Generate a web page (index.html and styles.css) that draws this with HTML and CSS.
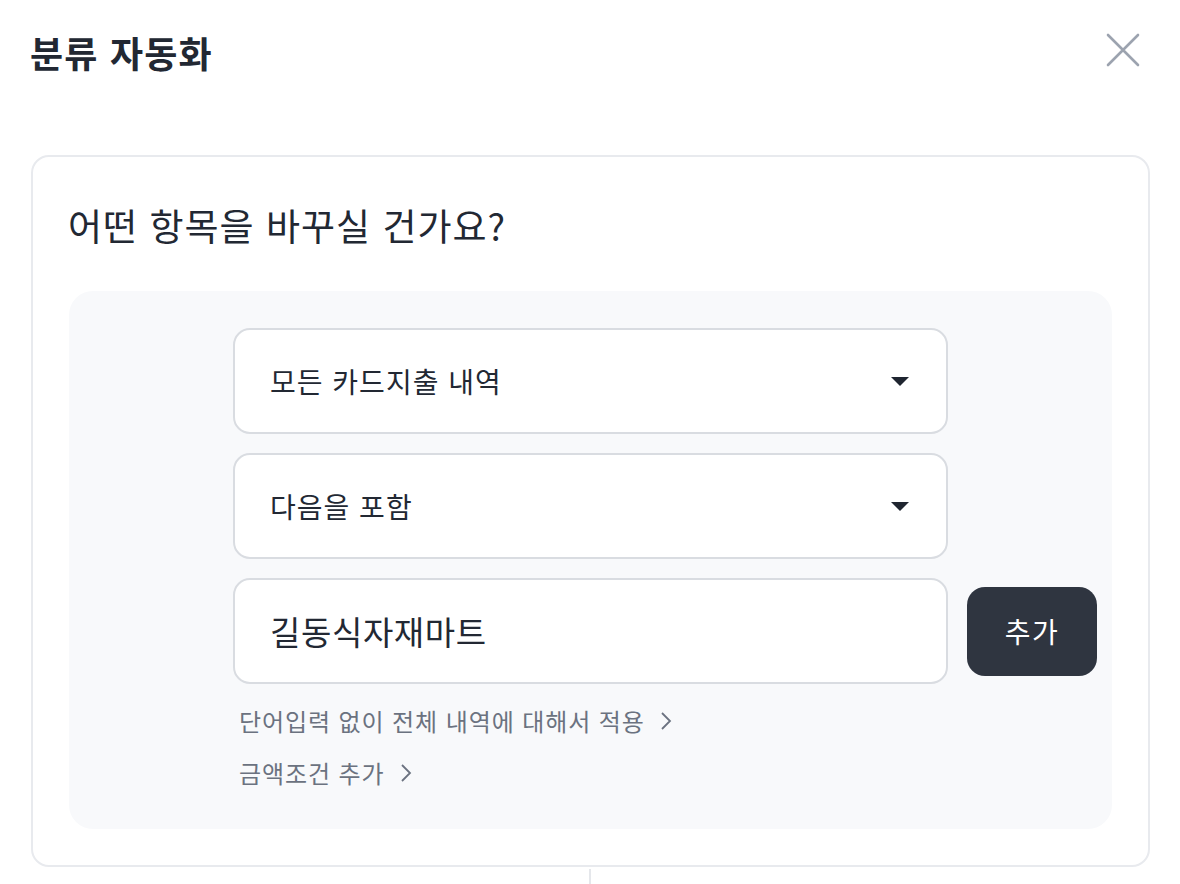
FILE: index.html
```html
<!DOCTYPE html>
<html lang="ko">
<head>
<meta charset="utf-8">
<title>분류 자동화</title>
<link rel="stylesheet" href="styles.css">
</head>
<body>
<div class="page">
  <header class="top">
    <h1 class="title">분류 자동화</h1>
    <button class="close" aria-label="닫기">
      <svg width="34" height="34" viewBox="0 0 34 34"><path d="M2 2 L32 32 M32 2 L2 32" stroke="#9ca3af" stroke-width="2.6" fill="none" stroke-linecap="round"/></svg>
    </button>
  </header>
  <section class="card">
    <h2 class="question">어떤 항목을 바꾸실 건가요?</h2>
    <div class="panel">
      <div class="field select"><span>모든 카드지출 내역</span><i class="caret"></i></div>
      <div class="field select"><span>다음을 포함</span><i class="caret"></i></div>
      <div class="input-row">
        <div class="field input"><span>길동식자재마트</span></div>
        <button class="add">추가</button>
      </div>
      <div class="links">
        <a class="link">단어입력 없이 전체 내역에 대해서 적용<svg class="chev" width="12" height="20" viewBox="0 0 12 20"><path d="M2 2 L10 10 L2 18" stroke="#6b7280" stroke-width="1.8" fill="none"/></svg></a>
        <a class="link">금액조건 추가<svg class="chev" width="12" height="20" viewBox="0 0 12 20"><path d="M2 2 L10 10 L2 18" stroke="#6b7280" stroke-width="1.8" fill="none"/></svg></a>
      </div>
    </div>
  </section>
  <div class="connector"></div>
</div>
</body>
</html>
```

FILE: styles.css
```css
* { box-sizing: border-box; }
html, body { margin: 0; padding: 0; background: #fff; }
body {
  font-family: "Noto Sans CJK KR", "Noto Sans", sans-serif;
  color: #222833;
}
.page {
  padding: 26px 30px 0 30px;
  display: flex;
  flex-direction: column;
}
.top {
  display: flex;
  justify-content: space-between;
  align-items: center;
  height: 52px;
}
.title {
  margin: 0;
  font-size: 36px;
  font-weight: 700;
  line-height: 52px;
  letter-spacing: 1.2px;
}
.close {
  border: 0;
  background: none;
  padding: 0;
  margin-right: 10px;
  margin-top: -4px;
  width: 34px;
  height: 34px;
  display: flex;
}
.card {
  margin-top: 77px;
  margin-left: 1px;
  border: 2px solid #e8eaee;
  border-radius: 18px;
  padding: 36px 36px 36px 36px;
}
.question {
  margin: 0 0 0 -1px;
  font-size: 37px;
  font-weight: 400;
  line-height: 64px;
  letter-spacing: 1px;
  height: 62px;
  margin-bottom: 36px;
}
.panel {
  background: #f8f9fb;
  border-radius: 24px;
  padding: 37px 15px 37px 164px;
  display: flex;
  flex-direction: column;
  gap: 19px;
}
.field {
  width: 715px;
  height: 106px;
  background: #fff;
  border: 2px solid #d9dce1;
  border-radius: 17px;
  display: flex;
  align-items: center;
  justify-content: space-between;
  padding: 0 37px 0 35px;
  font-size: 28px;
  letter-spacing: 1px;
}
.caret {
  width: 0;
  height: 0;
  border-left: 9px solid transparent;
  border-right: 9px solid transparent;
  border-top: 9px solid #1f2530;
}
.input-row {
  display: flex;
  align-items: center;
  gap: 19px;
}
.field.input { font-size: 33px; letter-spacing: 0.6px; }
.add {
  width: 130px;
  height: 89px;
  border: 0;
  border-radius: 18px;
  background: #2f3540;
  color: #fff;
  font-family: inherit;
  font-size: 28px;
  letter-spacing: 1.5px;
}
.links {
  display: flex;
  flex-direction: column;
  gap: 14px;
  padding-left: 6px;
  margin-top: -1px;
}
.link {
  display: flex;
  align-items: center;
  font-size: 24px;
  line-height: 38px;
  color: #6b7280;
  letter-spacing: 0.9px;
}
.chev { margin-left: 15px; }
.connector {
  align-self: center;
  width: 2px;
  height: 30px;
  background: #e5e7eb;
  margin-top: 2px;
}
```
